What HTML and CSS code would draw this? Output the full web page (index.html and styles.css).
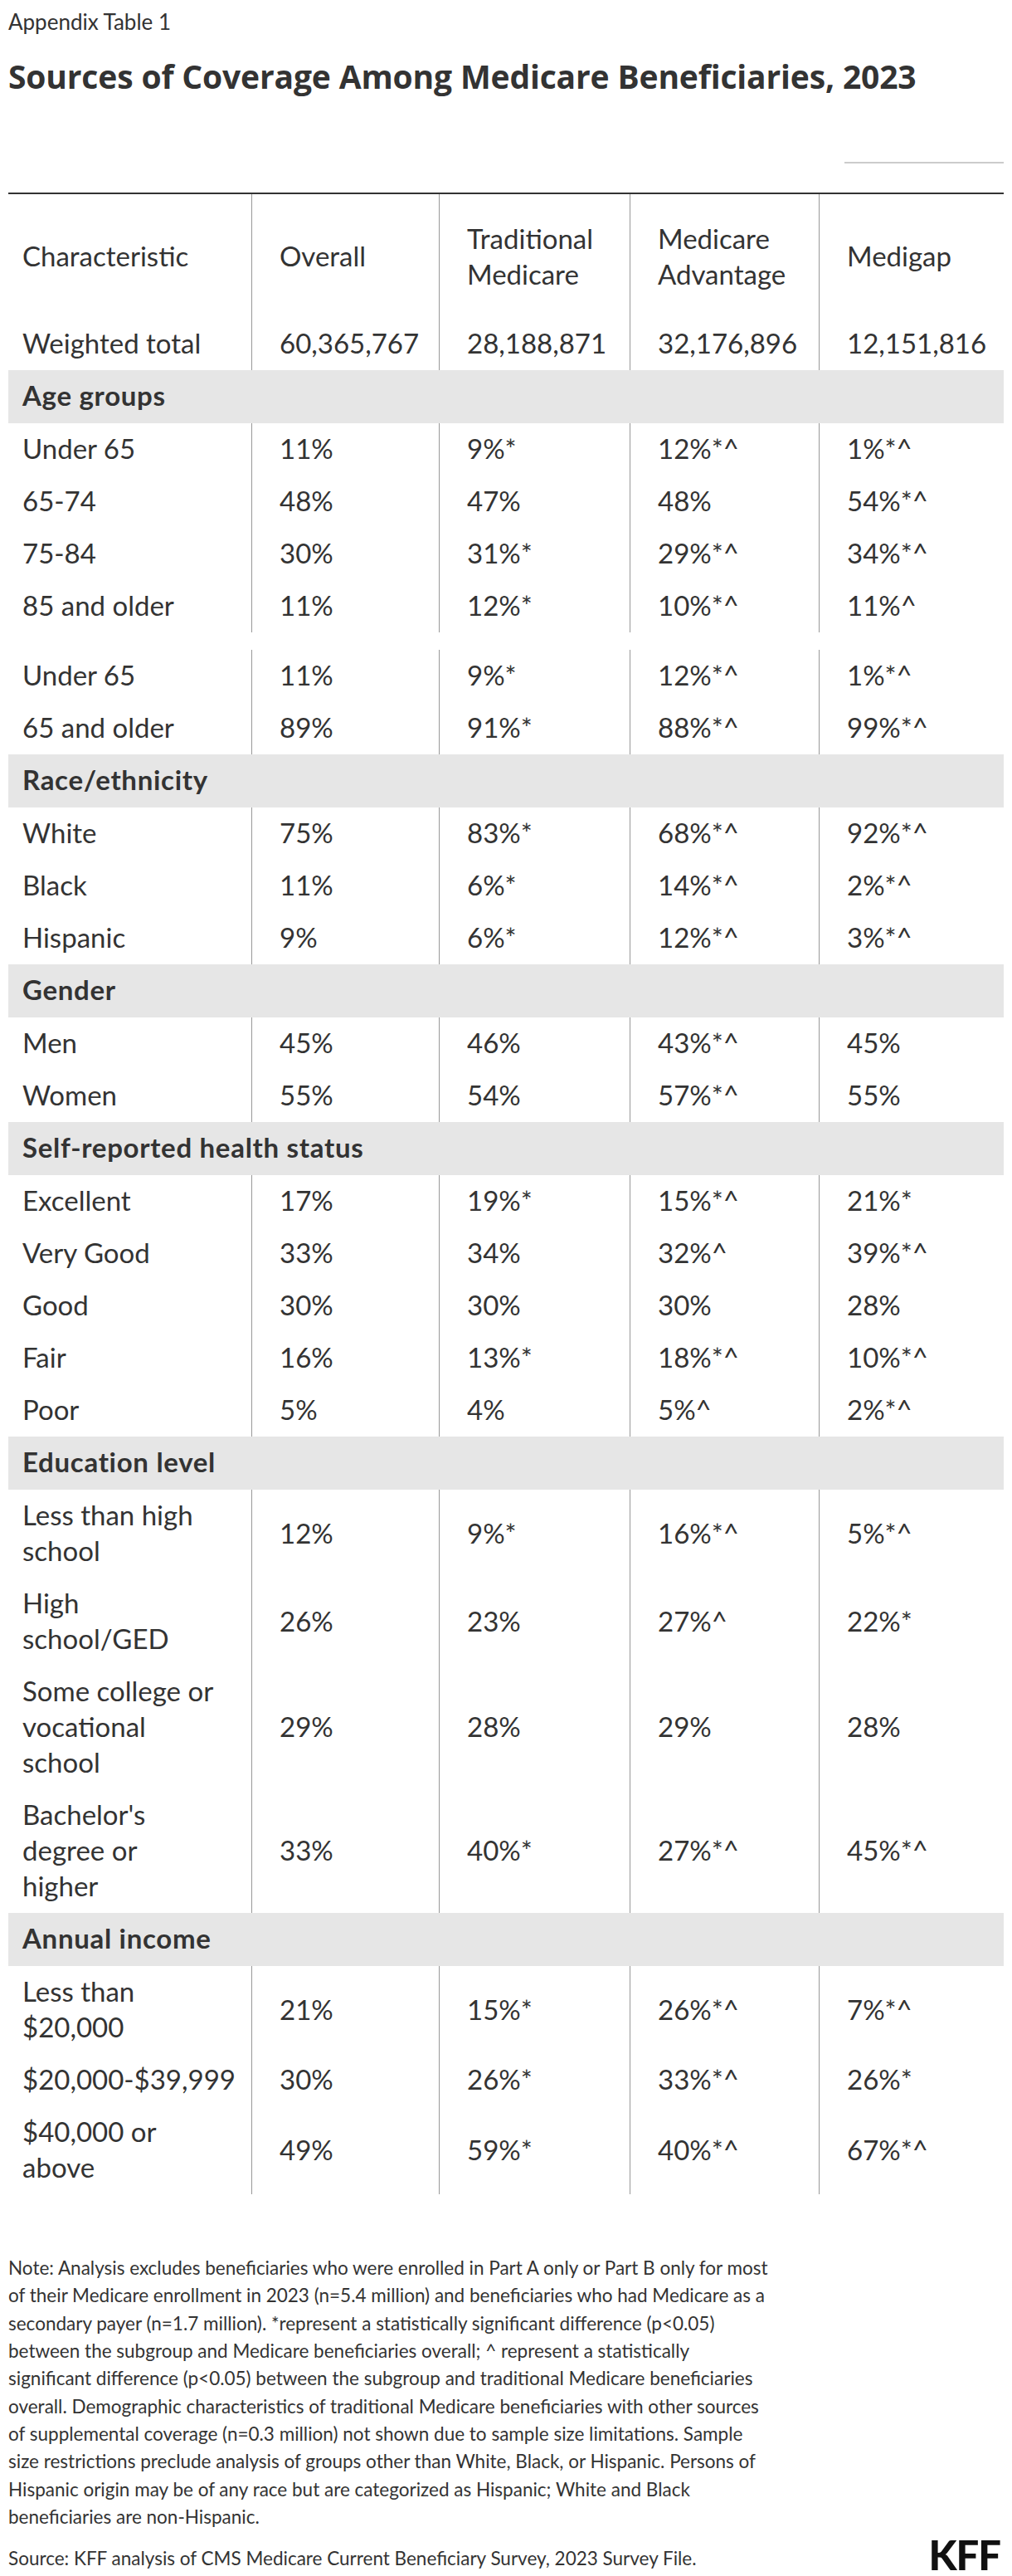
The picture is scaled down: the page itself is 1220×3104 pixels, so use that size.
FILE: index.html
```html
<!DOCTYPE html>
<html lang="en">
<head>
<meta charset="utf-8">
<title>Sources of Coverage Among Medicare Beneficiaries, 2023</title>
<link rel="stylesheet" href="styles.css">
</head>
<body>
<div class="page">
  <div class="eyebrow">Appendix Table 1</div>
  <h1 class="title">Sources of Coverage Among Medicare Beneficiaries, 2023</h1>
  <div class="legend-bar"><span class="legend-line"></span></div>

  <div class="table-wrap">
    <table class="data">
      <colgroup>
        <col class="c1"><col class="c2"><col class="c3"><col class="c4"><col class="c5">
      </colgroup>
      <thead>
        <tr class="head">
          <th>Characteristic</th>
          <th>Overall</th>
          <th>Traditional<br>Medicare</th>
          <th>Medicare<br>Advantage</th>
          <th>Medigap</th>
        </tr>
      </thead>
      <tbody>
        <tr><td>Weighted total</td><td>60,365,767</td><td>28,188,871</td><td>32,176,896</td><td>12,151,816</td></tr>
        <tr class="band"><td colspan="5">Age groups</td></tr>
        <tr><td>Under 65</td><td>11%</td><td>9%*</td><td>12%*^</td><td>1%*^</td></tr>
        <tr><td>65-74</td><td>48%</td><td>47%</td><td>48%</td><td>54%*^</td></tr>
        <tr><td>75-84</td><td>30%</td><td>31%*</td><td>29%*^</td><td>34%*^</td></tr>
        <tr><td>85 and older</td><td>11%</td><td>12%*</td><td>10%*^</td><td>11%^</td></tr>
        <tr class="spacer"><td colspan="5"></td></tr>
        <tr><td>Under 65</td><td>11%</td><td>9%*</td><td>12%*^</td><td>1%*^</td></tr>
        <tr><td>65 and older</td><td>89%</td><td>91%*</td><td>88%*^</td><td>99%*^</td></tr>
        <tr class="band"><td colspan="5">Race/ethnicity</td></tr>
        <tr><td>White</td><td>75%</td><td>83%*</td><td>68%*^</td><td>92%*^</td></tr>
        <tr><td>Black</td><td>11%</td><td>6%*</td><td>14%*^</td><td>2%*^</td></tr>
        <tr><td>Hispanic</td><td>9%</td><td>6%*</td><td>12%*^</td><td>3%*^</td></tr>
        <tr class="band"><td colspan="5">Gender</td></tr>
        <tr><td>Men</td><td>45%</td><td>46%</td><td>43%*^</td><td>45%</td></tr>
        <tr><td>Women</td><td>55%</td><td>54%</td><td>57%*^</td><td>55%</td></tr>
        <tr class="band"><td colspan="5">Self-reported health status</td></tr>
        <tr><td>Excellent</td><td>17%</td><td>19%*</td><td>15%*^</td><td>21%*</td></tr>
        <tr><td>Very Good</td><td>33%</td><td>34%</td><td>32%^</td><td>39%*^</td></tr>
        <tr><td>Good</td><td>30%</td><td>30%</td><td>30%</td><td>28%</td></tr>
        <tr><td>Fair</td><td>16%</td><td>13%*</td><td>18%*^</td><td>10%*^</td></tr>
        <tr><td>Poor</td><td>5%</td><td>4%</td><td>5%^</td><td>2%*^</td></tr>
        <tr class="band"><td colspan="5">Education level</td></tr>
        <tr><td>Less than high<br>school</td><td>12%</td><td>9%*</td><td>16%*^</td><td>5%*^</td></tr>
        <tr><td>High<br>school/GED</td><td>26%</td><td>23%</td><td>27%^</td><td>22%*</td></tr>
        <tr><td>Some college or<br>vocational<br>school</td><td>29%</td><td>28%</td><td>29%</td><td>28%</td></tr>
        <tr><td>Bachelor's<br>degree or<br>higher</td><td>33%</td><td>40%*</td><td>27%*^</td><td>45%*^</td></tr>
        <tr class="band"><td colspan="5">Annual income</td></tr>
        <tr><td>Less than<br>$20,000</td><td>21%</td><td>15%*</td><td>26%*^</td><td>7%*^</td></tr>
        <tr><td>$20,000-$39,999</td><td>30%</td><td>26%*</td><td>33%*^</td><td>26%*</td></tr>
        <tr><td>$40,000 or<br>above</td><td>49%</td><td>59%*</td><td>40%*^</td><td>67%*^</td></tr>
      </tbody>
    </table>
  </div>

  <p class="note">Note: Analysis excludes beneficiaries who were enrolled in Part A only or Part B only for most<br>of their Medicare enrollment in 2023 (n=5.4 million) and beneficiaries who had Medicare as a<br>secondary payer (n=1.7 million). *represent a statistically significant difference (p&lt;0.05)<br>between the subgroup and Medicare beneficiaries overall; ^ represent a statistically<br>significant difference (p&lt;0.05) between the subgroup and traditional Medicare beneficiaries<br>overall. Demographic characteristics of traditional Medicare beneficiaries with other sources<br>of supplemental coverage (n=0.3 million) not shown due to sample size limitations. Sample<br>size restrictions preclude analysis of groups other than White, Black, or Hispanic. Persons of<br>Hispanic origin may be of any race but are categorized as Hispanic; White and Black<br>beneficiaries are non-Hispanic.</p>
  <div class="footer">
    <p class="source">Source: KFF analysis of CMS Medicare Current Beneficiary Survey, 2023 Survey File.</p>
    <div class="logo">KFF</div>
  </div>
</div>
</body>
</html>
```

FILE: styles.css
```css
html, body {
  margin: 0;
  padding: 0;
  background: #ffffff;
}
body {
  font-family: "Lato", "Open Sans", sans-serif;
  color: #333333;
}
.page {
  width: 1200px;
  padding: 0 10px;
}
.eyebrow {
  font-size: 26px;
  line-height: 36px;
  padding-top: 8px;
  font-weight: 400;
  color: #333333;
}
.title {
  margin: 23px 0 0 0;
  font-family: "Open Sans", "Lato", sans-serif;
  font-size: 39px;
  line-height: 50px;
  font-weight: 700;
  letter-spacing: -0.15px;
  color: #333333;
}
.legend-bar {
  display: flex;
  justify-content: flex-end;
  margin-top: 78px;
}
.legend-line {
  display: block;
  width: 192px;
  height: 2px;
  background: #cccccc;
}
.table-wrap {
  margin-top: 35px;
  border-top: 2px solid #333333;
}
.data {
  width: 1200px;
  border-collapse: separate;
  border-spacing: 0;
  table-layout: fixed;
  font-size: 33px;
  line-height: 43px;
}
.c1 { width: 293px; }
.c2 { width: 226px; }
.c3 { width: 230px; }
.c4 { width: 228px; }
.c5 { width: 223px; }
.data th, .data td {
  text-align: left;
  vertical-align: middle;
  font-weight: 400;
  white-space: nowrap;
  padding: 9px 0 11px 33px;
}
.data th:first-child, .data td:first-child {
  padding-left: 17px;
}
.data th + th, .data td + td {
  border-left: 1px solid #999999;
}
.head th {
  height: 149px;
  padding-top: 0;
  padding-bottom: 0;
  box-sizing: border-box;
}
.band td {
  background: #e6e6e6;
  font-weight: 700;
  letter-spacing: 0.7px;
  padding: 9px 0 12px 17px;
}
.spacer td {
  height: 21px;
  padding: 0;
  border: none;
}
.note {
  margin: 72px 0 0 0;
  font-size: 22.5px;
  line-height: 33.33px;
  white-space: nowrap;
}
.footer {
  display: flex;
  justify-content: space-between;
  align-items: flex-end;
  margin-top: 11px;
}
.source {
  margin: 0;
  font-size: 22.5px;
  line-height: 33.33px;
  white-space: nowrap;
}
.logo {
  font-family: "Lato", sans-serif;
  font-weight: 900;
  font-size: 49px;
  line-height: 36px;
  letter-spacing: -1px;
  color: #111111;
  margin-right: 4px;
  margin-bottom: 3px;
}
```
